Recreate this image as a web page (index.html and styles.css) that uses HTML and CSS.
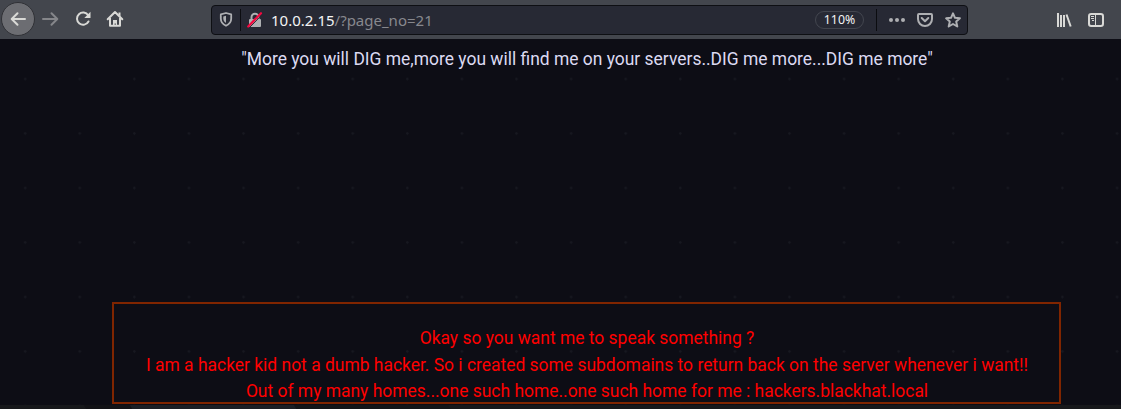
FILE: index.html
```
<!DOCTYPE html>
<html lang="en">
<head>
<meta charset="utf-8">
<title>10.0.2.15</title>
<link rel="stylesheet" href="styles.css">
</head>
<body>
<header class="toolbar">
  <nav class="nav">
    <span class="back"><svg width="16" height="16" viewBox="0 0 16 16"><path d="M15 8H2M7.5 2.2 1.7 8l5.8 5.8"/></svg></span>
    <svg class="forward" width="16" height="16" viewBox="0 0 16 16"><path d="M0 8h14M8.5 2.2 14.3 8l-5.8 5.8"/></svg>
    <svg class="reload" width="16" height="16" viewBox="0 0 16 16"><path d="M13.2 4.300A6.100 6.100 0 1 0 13.500 10.500"/><path class="solid" d="M15.500.700v6.200H9.300z"/></svg>
    <svg class="home" width="16" height="16" viewBox="0 0 16 16"><path d="M.7 8.300 8 1l7.300 7.300M3 7v7.800h10V7"/><path class="solid" d="M6 15V9h4v6H8.800v-2.500H7.600V15zM11.500 1.500h2v4l-2-2z"/></svg>
  </nav>
  <div class="urlbar">
    <svg class="shield" width="14" height="15" viewBox="0 0 14 15"><path d="M7 1 12.200 2.400V6.500c0 3.200-2 5.800-5.200 7.300-3.200-1.500-5.200-4.100-5.200-7.300V2.400z"/><path class="solid" d="M7 3.800v7.300C5.100 9.900 4.300 8.300 4.300 6.300V4.500z"/></svg>
    <span class="divider"></span>
    <svg class="lock" width="16" height="16" viewBox="0 0 16 16"><path d="M4.500 8V5.200a3.500 3.500 0 0 1 7 0V8"/><rect class="solid" x="2" y="7" width="12" height="8" rx="1"/><path class="gap" d="M2.500 15.500 15 2.800"/><path class="slash" d="M1.200 14.500 14 1.200"/></svg>
    <span class="url"><span class="host">10.0.2.15</span>/?page_no=21</span>
    <span class="zoom">110%</span>
    <span class="divider second"></span>
    <svg class="dots" width="16" height="4" viewBox="0 0 16 4"><circle cx="2" cy="2" r="2"/><circle cx="8" cy="2" r="2"/><circle cx="14" cy="2" r="2"/></svg>
    <svg class="pocket" width="16" height="16" viewBox="0 0 16 16"><path d="M1.900 2h12.200q.9 0 .9.900V7A7 7 0 0 1 1 7V2.900Q1 2 1.900 2z"/><path d="M4.700 6 8 9.200 11.300 6"/></svg>
    <svg class="star" width="16" height="16" viewBox="0 0 16 16"><path d="m8 1.300 2 4.500 4.900.5-3.700 3.300 1.100 4.900L8 12l-4.300 2.500 1.100-4.900L1.100 6.300 6 5.800z"/></svg>
  </div>
  <svg class="library" width="16" height="16" viewBox="0 0 16 16"><path d="M2 1v14M5 3v12M8 3v12M10.500 2.500l4.200 12"/></svg>
  <svg class="sidebar" width="16" height="16" viewBox="0 0 16 16"><rect x="1" y="2" width="14" height="12" rx="2.200"/><path class="thin" d="M7.500 2v12M3 4.500h3M3 6.500h3M4 8.500h2"/></svg>
</header>
<main class="page">
  <p class="quote">"More you will DIG me,more you will find me on your servers..DIG me more...DIG me more"</p>
  <section class="message">
    <p>Okay so you want me to speak something ?</p>
    <p>I am a hacker kid not a dumb hacker. So i created some subdomains to return back on the server whenever i want!!</p>
    <p>Out of my many homes...one such home..one such home for me : hackers.blackhat.local</p>
  </section>
</main>
<footer class="strip"></footer>
</body>
</html>
```
FILE: styles.css
```
* { box-sizing: border-box; }
body { margin: 0; height: 409px; overflow: hidden; background: #0d0d15; display: flex; flex-direction: column; }
p { margin: 0; }
svg { display: block; flex: none; fill: none; stroke: #d9d9d6; stroke-width: 2; overflow: visible; }
svg path { stroke-linecap: round; stroke-linejoin: round; }
svg .solid { fill: #d9d9d6; stroke: none; }

.toolbar { height: 39px; flex: none; display: flex; align-items: center; background: #43464d; }
.nav { display: flex; align-items: center; width: 211px; padding: 0 0 1px 1px; }
.back { width: 34px; height: 34px; border: 1px solid #303136; border-radius: 50%; background: #6c6d72; display: grid; place-items: center; }
.forward { margin-left: 8px; stroke: #85868a; }
.reload { margin-left: 16px; }
.home { margin-left: 16px; }

.urlbar { width: 757px; height: 30px; display: flex; align-items: center; border: 1px solid #0e0f13; border-radius: 4px; background: #272934; }
.urlbar svg { stroke: #aeafb2; }
.urlbar svg .solid { fill: #aeafb2; }
.shield { margin-left: 7px; }
.urlbar .shield { stroke-width: 1.8; }
.divider { width: 1px; height: 22px; margin-left: 7px; background: #0b0c10; }
.lock { margin-left: 6px; }
.urlbar .lock .gap { stroke: #272934; stroke-width: 1; }
.urlbar .lock .slash { stroke: #f4083f; stroke-width: 2.2; }
.url { width: 544px; margin-left: 8px; color: #87888e; font: 15px/20px "Noto Sans", sans-serif; white-space: nowrap; }
.host { color: #f4f4f5; }
.zoom { width: 49px; height: 18px; border: 1px solid #43464f; border-radius: 9px; color: #f4f4f5; font: 12.3px/16px "Noto Sans", sans-serif; text-align: center; }
.divider.second { margin-left: 12px; }
.dots { margin-left: 12px; }
.urlbar .dots { fill: #aeafb2; stroke: none; }
.pocket { margin-left: 12px; }
.star { margin-left: 12px; }
.library { margin-left: 88px; }
.sidebar { margin-left: 16px; }
.sidebar .thin { stroke-width: 1; stroke-linecap: butt; }
.library path { stroke-linecap: butt; }

.page {
  height: 366px; flex: none; padding: 7px 60px 0 113px;
  font: 17.45px/26.4px Roboto, sans-serif; text-align: center;
  background: radial-gradient(circle at 25.2px 40px, #171820 0 1px, transparent 1.5px) 0 0 / 54.6px 54.5px;
}
.quote { color: #dcdaf2; white-space: nowrap; }
.message { height: 102px; margin: 229.6px 0 0 -1px; padding: 21.4px 0 0 1px; border: 2px solid #802500; color: #ff0000; white-space: nowrap; }
.strip { height: 4px; flex: none; background: linear-gradient(60deg, #17181b 0 74px, #121216 75px 114px, #1c1f25 115px 256px, #131518 257px 390px, #17181b 391px); }
```
